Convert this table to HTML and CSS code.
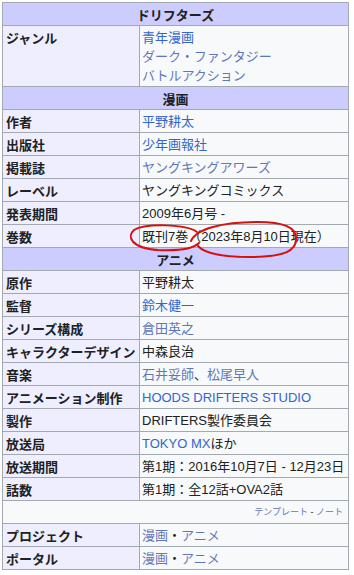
FILE: index.html
```html
<!DOCTYPE html>
<html lang="ja">
<head>
<meta charset="utf-8">
<link rel="stylesheet" href="styles.css">
</head>
<body>
<div class="wrap">
<table class="infobox">
<colgroup><col class="c1"><col class="c2"></colgroup>
<tr><th colspan="2" class="head">ドリフターズ</th></tr>
<tr><th class="lbl">ジャンル</th><td><a class="lk">青年漫画</a><br><a class="lk pale">ダーク・ファンタジー</a><br><a class="lk pale">バトルアクション</a></td></tr>
<tr><th colspan="2" class="head">漫画</th></tr>
<tr><th class="lbl">作者</th><td><a class="lk">平野耕太</a></td></tr>
<tr><th class="lbl">出版社</th><td><a class="lk">少年画報社</a></td></tr>
<tr><th class="lbl">掲載誌</th><td><a class="lk pale">ヤングキングアワーズ</a></td></tr>
<tr><th class="lbl">レーベル</th><td>ヤングキングコミックス</td></tr>
<tr><th class="lbl">発表期間</th><td>2009年6月号 -</td></tr>
<tr><th class="lbl">巻数</th><td>既刊7巻（2023年8月10日現在）</td></tr>
<tr><th colspan="2" class="head">アニメ</th></tr>
<tr><th class="lbl">原作</th><td>平野耕太</td></tr>
<tr><th class="lbl">監督</th><td><a class="lk">鈴木健一</a></td></tr>
<tr><th class="lbl">シリーズ構成</th><td><a class="lk pale">倉田英之</a></td></tr>
<tr><th class="lbl">キャラクターデザイン</th><td>中森良治</td></tr>
<tr><th class="lbl">音楽</th><td><a class="lk pale">石井妥師</a>、<a class="lk pale">松尾早人</a></td></tr>
<tr><th class="lbl">アニメーション制作</th><td><a class="lk">HOODS DRIFTERS STUDIO</a></td></tr>
<tr><th class="lbl">製作</th><td>DRIFTERS製作委員会</td></tr>
<tr><th class="lbl">放送局</th><td><a class="lk">TOKYO MX</a>ほか</td></tr>
<tr><th class="lbl">放送期間</th><td>第1期：2016年10月7日 - 12月23日</td></tr>
<tr><th class="lbl">話数</th><td>第1期：全12話+OVA2話</td></tr>
<tr><td colspan="2" class="tpl"><a class="lk pale">テンプレート</a> - <a class="lk pale">ノート</a></td></tr>
<tr><th class="lbl">プロジェクト</th><td><a class="lk pale">漫画</a>・<a class="lk pale">アニメ</a></td></tr>
<tr><th class="lbl">ポータル</th><td><a class="lk pale">漫画</a>・<a class="lk pale">アニメ</a></td></tr>
</table>
<svg class="marks" width="354" height="575" viewBox="0 0 354 575">
<path d="M197,232 C186,224 145,223 134,230 C127,236 130,248 158,250 C180,251 193,249 199,243" fill="none" stroke="#d80f0f" stroke-width="2" stroke-linecap="round"/>
<path d="M191,241 C196,229 222,222 258,222 C284,222 296,228 296,238 C297,251 284,257 250,257 C224,257 205,254 198,246" fill="none" stroke="#d80f0f" stroke-width="2" stroke-linecap="round"/>
</svg>
</div>
</body>
</html>
```
FILE: styles.css
```css
html, body {
  margin: 0;
  padding: 0;
  background: #ffffff;
}
body {
  font-family: "Liberation Sans", "Noto Sans CJK JP", sans-serif;
  font-size: 13px;
  color: #202122;
}
.wrap {
  position: relative;
  padding: 2px 0 0 2px;
}
.infobox {
  border-collapse: collapse;
  table-layout: fixed;
  width: 347px;
  background: #f8f9fa;
  border: 1px solid #a2a9b1;
}
.c1 { width: 137px; }
.infobox th,
.infobox td {
  border: 1px solid #a2a9b1;
  padding: 1.5px 3px 1.5px 3px;
  line-height: 19px;
  text-align: left;
  vertical-align: top;
  white-space: nowrap;
}
.infobox td {
  padding-left: 2px;
  font-family: "Liberation Sans", "Noto Sans CJK JP", sans-serif;
}
.infobox th {
  font-family: "Noto Sans CJK JP", sans-serif;
  font-weight: bold;
}
.infobox .head {
  background: #ccccff;
  text-align: center;
}
.infobox .lbl {
  background: #eeeeff;
}
.lk {
  color: #3366cc;
  text-decoration: none;
}
.lk.pale {
  color: #5f77b8;
}
.infobox .tpl {
  text-align: right;
  font-size: 9px;
  padding-right: 5px;
  height: 19px;
}
.marks {
  position: absolute;
  left: 0;
  top: 0;
  pointer-events: none;
}
```
